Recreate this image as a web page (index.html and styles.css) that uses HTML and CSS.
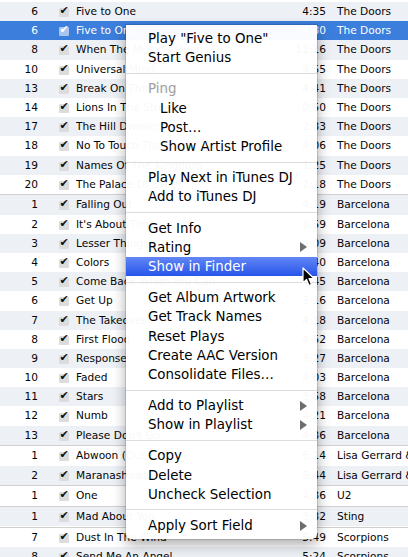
FILE: index.html
```html
<!DOCTYPE html>
<html>
<head>
<meta charset="utf-8">
<link rel="stylesheet" href="styles.css">
</head>
<body>
<div class="list">
  <div class="group">
    <div class="row alt"><span class="num">6</span><span class="chk"><span class="box">✔</span></span><span class="title">Five to One</span><span class="time">4:35</span><span class="artist">The Doors</span></div>
    <div class="row sel"><span class="num">6</span><span class="chk"><span class="box">✔</span></span><span class="title">Five to One</span><span class="time">4:30</span><span class="artist">The Doors</span></div>
    <div class="row alt"><span class="num">8</span><span class="chk"><span class="box">✔</span></span><span class="title">When The Music's Over</span><span class="time">11:16</span><span class="artist">The Doors</span></div>
    <div class="row"><span class="num">10</span><span class="chk"><span class="box">✔</span></span><span class="title">Universal Mind</span><span class="time">4:55</span><span class="artist">The Doors</span></div>
    <div class="row alt"><span class="num">13</span><span class="chk"><span class="box">✔</span></span><span class="title">Break On Through</span><span class="time">4:41</span><span class="artist">The Doors</span></div>
    <div class="row"><span class="num">14</span><span class="chk"><span class="box">✔</span></span><span class="title">Lions In The Street</span><span class="time">0:50</span><span class="artist">The Doors</span></div>
    <div class="row alt"><span class="num">17</span><span class="chk"><span class="box">✔</span></span><span class="title">The Hill Dwellers</span><span class="time">2:33</span><span class="artist">The Doors</span></div>
    <div class="row"><span class="num">18</span><span class="chk"><span class="box">✔</span></span><span class="title">No To Touch The Earth</span><span class="time">4:06</span><span class="artist">The Doors</span></div>
    <div class="row alt"><span class="num">19</span><span class="chk"><span class="box">✔</span></span><span class="title">Names Of The Kingdom</span><span class="time">1:25</span><span class="artist">The Doors</span></div>
    <div class="row"><span class="num">20</span><span class="chk"><span class="box">✔</span></span><span class="title">The Palace Of Exile</span><span class="time">2:18</span><span class="artist">The Doors</span></div>
  </div>
  <div class="group">
    <div class="row alt"><span class="num">1</span><span class="chk"><span class="box">✔</span></span><span class="title">Falling Out</span><span class="time">4:19</span><span class="artist">Barcelona</span></div>
    <div class="row"><span class="num">2</span><span class="chk"><span class="box">✔</span></span><span class="title">It's About Time</span><span class="time">3:59</span><span class="artist">Barcelona</span></div>
    <div class="row alt"><span class="num">3</span><span class="chk"><span class="box">✔</span></span><span class="title">Lesser Things</span><span class="time">4:09</span><span class="artist">Barcelona</span></div>
    <div class="row"><span class="num">4</span><span class="chk"><span class="box">✔</span></span><span class="title">Colors</span><span class="time">3:40</span><span class="artist">Barcelona</span></div>
    <div class="row alt"><span class="num">5</span><span class="chk"><span class="box">✔</span></span><span class="title">Come Back When You Can</span><span class="time">4:45</span><span class="artist">Barcelona</span></div>
    <div class="row"><span class="num">6</span><span class="chk"><span class="box">✔</span></span><span class="title">Get Up</span><span class="time">3:16</span><span class="artist">Barcelona</span></div>
    <div class="row alt"><span class="num">7</span><span class="chk"><span class="box">✔</span></span><span class="title">The Takeover</span><span class="time">4:18</span><span class="artist">Barcelona</span></div>
    <div class="row"><span class="num">8</span><span class="chk"><span class="box">✔</span></span><span class="title">First Flood</span><span class="time">4:52</span><span class="artist">Barcelona</span></div>
    <div class="row alt"><span class="num">9</span><span class="chk"><span class="box">✔</span></span><span class="title">Response</span><span class="time">3:27</span><span class="artist">Barcelona</span></div>
    <div class="row"><span class="num">10</span><span class="chk"><span class="box">✔</span></span><span class="title">Faded</span><span class="time">4:03</span><span class="artist">Barcelona</span></div>
    <div class="row alt"><span class="num">11</span><span class="chk"><span class="box">✔</span></span><span class="title">Stars</span><span class="time">3:58</span><span class="artist">Barcelona</span></div>
    <div class="row"><span class="num">12</span><span class="chk"><span class="box">✔</span></span><span class="title">Numb</span><span class="time">4:21</span><span class="artist">Barcelona</span></div>
    <div class="row alt"><span class="num">13</span><span class="chk"><span class="box">✔</span></span><span class="title">Please Don't Go</span><span class="time">4:36</span><span class="artist">Barcelona</span></div>
  </div>
  <div class="group">
    <div class="row"><span class="num">1</span><span class="chk"><span class="box">✔</span></span><span class="title">Abwoon (Our Father)</span><span class="time">6:14</span><span class="artist">Lisa Gerrard &amp; Pieter Bourke</span></div>
    <div class="row alt"><span class="num">2</span><span class="chk"><span class="box">✔</span></span><span class="title">Maranashaway</span><span class="time">5:44</span><span class="artist">Lisa Gerrard &amp; Pieter Bourke</span></div>
  </div>
  <div class="group">
    <div class="row"><span class="num">1</span><span class="chk"><span class="box">✔</span></span><span class="title">One</span><span class="time">4:36</span><span class="artist">U2</span></div>
  </div>
  <div class="group">
    <div class="row alt"><span class="num">1</span><span class="chk"><span class="box">✔</span></span><span class="title">Mad About You</span><span class="time">3:32</span><span class="artist">Sting</span></div>
  </div>
  <div class="group">
    <div class="row"><span class="num">7</span><span class="chk"><span class="box">✔</span></span><span class="title">Dust In The Wind</span><span class="time">5:49</span><span class="artist">Scorpions</span></div>
    <div class="row alt"><span class="num">8</span><span class="chk"><span class="box">✔</span></span><span class="title">Send Me An Angel</span><span class="time">5:24</span><span class="artist">Scorpions</span></div>
  </div>
</div>

<div class="menu">
  <div class="mi">Play "Five to One"</div>
  <div class="mi">Start Genius</div>
  <div class="sep"></div>
  <div class="mi dis">Ping</div>
  <div class="mi ind">Like</div>
  <div class="mi ind">Post…</div>
  <div class="mi ind">Show Artist Profile</div>
  <div class="sep"></div>
  <div class="mi">Play Next in iTunes DJ</div>
  <div class="mi">Add to iTunes DJ</div>
  <div class="sep"></div>
  <div class="mi">Get Info</div>
  <div class="mi">Rating<svg class="arrow" width="7" height="10" viewBox="0 0 7 10"><path d="M0 0 L7 5 L0 10 Z"/></svg></div>
  <div class="mi hl">Show in Finder</div>
  <div class="sep"></div>
  <div class="mi">Get Album Artwork</div>
  <div class="mi">Get Track Names</div>
  <div class="mi">Reset Plays</div>
  <div class="mi">Create AAC Version</div>
  <div class="mi">Consolidate Files…</div>
  <div class="sep"></div>
  <div class="mi">Add to Playlist<svg class="arrow" width="7" height="10" viewBox="0 0 7 10"><path d="M0 0 L7 5 L0 10 Z"/></svg></div>
  <div class="mi">Show in Playlist<svg class="arrow" width="7" height="10" viewBox="0 0 7 10"><path d="M0 0 L7 5 L0 10 Z"/></svg></div>
  <div class="sep"></div>
  <div class="mi">Copy</div>
  <div class="mi">Delete</div>
  <div class="mi">Uncheck Selection</div>
  <div class="sep"></div>
  <div class="mi">Apply Sort Field<svg class="arrow" width="7" height="10" viewBox="0 0 7 10"><path d="M0 0 L7 5 L0 10 Z"/></svg></div>
</div>

<svg class="cursor" width="13" height="20" viewBox="0 0 13 20"><path d="M1 1 L1 16 L4.5 12.5 L7 18.5 L9.5 17.5 L7 11.5 L12 11.5 Z" fill="#000" stroke="#fff" stroke-width="1.2" stroke-linejoin="round"/></svg>
</body>
</html>
```
FILE: styles.css
```css
html, body {
  margin: 0;
  padding: 0;
}
body {
  width: 408px;
  height: 557px;
  overflow: hidden;
  background: #fff;
  position: relative;
  font-family: "DejaVu Sans", "Liberation Sans", sans-serif;
}
.list {
  padding-top: 2px;
}
.group + .group {
  border-top: 1px solid #cfcfcf;
  margin-top: 0.5px;
}
.row {
  display: grid;
  grid-template-columns: 38px 38px 214px 36px 1fr;
  height: 19.2px;
  line-height: 19.2px;
  font-size: 10.6px;
  color: #050505;
  white-space: nowrap;
  background: #fff;
}
.row.alt {
  background: #edf0f5;
}
.row.sel {
  background: #3b7edb;
  color: #fff;
}
.num {
  text-align: right;
}
.chk {
  display: flex;
  align-items: center;
  padding-left: 21px;
}
.box {
  width: 10px;
  height: 9px;
  margin-top: 2px;
  background: #dcdcdc;
  border-radius: 1px;
  font-size: 11px;
  line-height: 6px;
  text-align: center;
  color: #111;
}
.sel .box {
  background: #a9c5ef;
  color: #fff;
}
.title {
  overflow: hidden;
}
.time {
  text-align: right;
}
.artist {
  padding-left: 11px;
  overflow: hidden;
}
.menu {
  position: absolute;
  left: 126px;
  top: 25px;
  width: 191px;
  padding: 4px 0;
  background: rgba(255, 255, 255, 0.97);
  border-radius: 0 0 5px 5px;
  box-shadow: 0 0 0 1px rgba(0, 0, 0, 0.12), 0 5px 14px rgba(0, 0, 0, 0.35);
}
.mi {
  display: flex;
  align-items: center;
  justify-content: space-between;
  height: 19.2px;
  padding: 0 10px 0 22px;
  font-size: 13.4px;
  color: #000;
  white-space: nowrap;
}
.mi.ind {
  padding-left: 34px;
}
.mi.dis {
  color: #a0a0a0;
}
.mi.hl {
  background: linear-gradient(#6287f4, #2754ea);
  color: #fff;
}
.arrow {
  fill: #6e6e6e;
}
.sep {
  height: 12px;
  display: flex;
  align-items: center;
}
.sep::before {
  content: "";
  flex: 1;
  height: 1px;
  background: #dcdcdc;
}
.cursor {
  position: absolute;
  left: 302px;
  top: 267px;
}
```
